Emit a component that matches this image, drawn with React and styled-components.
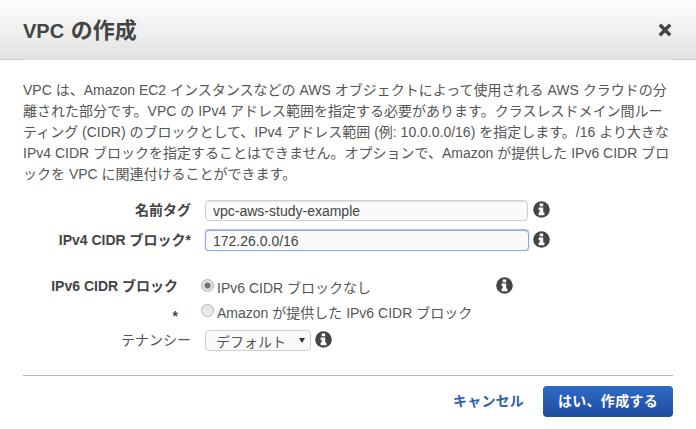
import React from "react";
import styled, { createGlobalStyle } from "styled-components";

const Global = createGlobalStyle`
  html, body { margin: 0; padding: 0; background: #fff; }
  body { font-family: "Liberation Sans", "Noto Sans CJK JP", sans-serif; font-size: 14px; color: #444; }
`;
const Dialog = styled.div`
  width: 696px; height: 429px; overflow: hidden; display: flex; flex-direction: column; background: #fff;
`;
const Header = styled.header`
  height: 60px; box-sizing: border-box; padding: 0 23px; display: flex; align-items: center; justify-content: space-between;
  background: linear-gradient(#fefefe, #e1e1e1); position: relative;
  &::before, &::after { content: ""; position: absolute; bottom: 0; width: 23px; height: 1px; background: #cdcdcd; }
  &::before { left: 0; }
  &::after { right: 0; }
`;
const Title = styled.h1`
  margin: 0; font-size: 20px; line-height: 24px; font-weight: 700; color: #444; position: relative; top: 1px;
`;
const TitleKana = styled.span`
  font-size: 22px; margin-left: 1px;
`;
const Close = styled.svg`
  width: 14px; height: 14px; fill: #444; flex: none; margin-right: 1px;
`;
const Body = styled.div`
  padding: 20px 23px 0; display: flex; flex-direction: column; flex: 1;
`;
const Intro = styled.p`
  margin: 0 0 15px; line-height: 21px; font-size: 14px; color: #555; white-space: nowrap; height: 105px;
`;
const Form = styled.div`
  display: grid; grid-template-columns: 168px 1fr; column-gap: 14px; align-content: start;
`;
const Label = styled.label`
  text-align: right; font-size: 14px; height: 20px; line-height: ${p => p.$line || 20}px; color: ${p => (p.$plain ? "#555" : "#444")};
  font-weight: ${p => (p.$plain ? 400 : 700)}; white-space: nowrap;
  margin-top: ${p => p.$top || 0}px; padding-right: ${p => p.$pad || 0}px;
`;
const Field = styled.div`
  display: flex; align-items: center; gap: 4px; height: 21px; margin-top: ${p => p.$top || 0}px;
`;
const TextInput = styled.input`
  box-sizing: border-box; width: ${p => (p.$focus ? 324 : 323)}px; height: 21px; padding: 0 7px;
  border: 1px solid ${p => (p.$focus ? "#8aa8ea" : "#cfcfcf")}; border-radius: 4px; background: #fafafa;
  box-shadow: ${p => (p.$focus ? "0 -1px 1px -0.5px #a9bff0, 0 0 1px #8aa8ea" : "inset 0 1px 1px #e4e4e4")};
  font: 14px "Liberation Sans", sans-serif; color: #444; outline: none;
`;
const InfoSvg = styled.svg`
  width: 17px; height: 17px; flex: none; margin-left: ${p => p.$left ?? 0}px; position: relative; top: -1px;
`;
const RadioRow = styled.div`
  display: flex; align-items: center; height: 21px; margin-top: ${p => p.$top || 0}px; color: #555; white-space: nowrap;
`;
const RadioDot = styled.span`
  box-sizing: border-box; width: 13px; height: 13px; border-radius: 50%; border: 1px solid #b5b5b5; margin: -2px 3px 0 -4px; flex: none;
  background: ${p => (p.$on ? "radial-gradient(circle, #707070 0 2.5px, #e0e0e0 3.5px)" : "linear-gradient(#e0e0e0, #f0f0f0)")};
`;
const RadioText = styled.span`
  width: ${p => p.$w || "auto"};
`;
const SelectBox = styled.div`
  box-sizing: border-box; width: 106px; height: 21px; border: 1px solid #cfcfcf; border-radius: 4px; background: #fafafa;
  display: flex; align-items: center; justify-content: space-between; padding: 0 5px 0 10px; color: #555; font-size: 14px; flex: none;
`;
const Caret = styled.span`
  width: 0; height: 0; border: 3.5px solid transparent; border-top: 5px solid #333; border-bottom: 0;
`;
const Footer = styled.footer`
  margin: 24px 0 0; border-top: 1px solid #b8b8b8; padding-top: 10px; display: flex; justify-content: flex-end; align-items: center; gap: 19px;
`;
const Cancel = styled.a`
  color: #2a5fb4; font-weight: 700; font-size: 14px; letter-spacing: 0.2px; padding-bottom: 4px;
`;
const Primary = styled.button`
  width: 130px; height: 31px; border: 0; border-radius: 4px; background: linear-gradient(#3069c6, #1f4d9f); color: #fff;
  font: 700 14px "Liberation Sans", "Noto Sans CJK JP", sans-serif; padding: 0 0 3px; letter-spacing: 0.3px;
`;

const Info = ({ left }) => (
  <InfoSvg $left={left} viewBox="0 0 17 17">
    <circle cx="8.5" cy="8.5" r="8.3" fill="#444" />
    <path d="M6.7 2.6h3.5v2.6H6.7z M5.6 6.4h4.6v5.2h1.2v2.6H5.6v-2.6h1.1V9H5.6z" fill="#fff" />
  </InfoSvg>
);

export default function App() {
  return (
    <Dialog>
      <Global />
      <Header>
        <Title>VPC <TitleKana>の作成</TitleKana></Title>
        <Close viewBox="0 0 14 14"><path d="M3 .6 7 4.6 11 .6 13.4 3 9.4 7 13.4 11 11 13.4 7 9.4 3 13.4 .6 11 4.6 7 .6 3z" /></Close>
      </Header>
      <Body>
        <Intro>
          VPC は、Amazon EC2 インスタンスなどの AWS オブジェクトによって使用される AWS クラウドの分<br />
          離された部分です。VPC の IPv4 アドレス範囲を指定する必要があります。クラスレスドメイン間ルー<br />
          ティング (CIDR) のブロックとして、IPv4 アドレス範囲 (例: 10.0.0.0/16) を指定します。/16 より大きな<br />
          IPv4 CIDR ブロックを指定することはできません。オプションで、Amazon が提供した IPv6 CIDR ブロ<br />
          ックを VPC に関連付けることができます。
        </Intro>
        <Form>
          <Label>名前タグ</Label>
          <Field>
            <TextInput defaultValue="vpc-aws-study-example" />
            <Info left={1} />
          </Field>
          <Label $top={9}>IPv4 CIDR ブロック*</Label>
          <Field $top={9}>
            <TextInput $focus defaultValue="172.26.0.0/16" />
            <Info />
          </Field>
          <Label $top={25} $pad={13}>IPv6 CIDR ブロック</Label>
          <RadioRow $top={25}>
            <RadioDot $on /><RadioText $w="279px">IPv6 CIDR ブロックなし</RadioText><Info />
          </RadioRow>
          <Label $top={4} $pad={13} $line={30}>*</Label>
          <RadioRow $top={4}>
            <RadioDot /><RadioText>Amazon が提供した IPv6 CIDR ブロック</RadioText>
          </RadioRow>
          <Label $plain $top={8}>テナンシー</Label>
          <Field $top={8}>
            <SelectBox>デフォルト<Caret /></SelectBox>
            <Info />
          </Field>
        </Form>
        <Footer>
          <Cancel>キャンセル</Cancel>
          <Primary>はい、作成する</Primary>
        </Footer>
      </Body>
    </Dialog>
  );
}
